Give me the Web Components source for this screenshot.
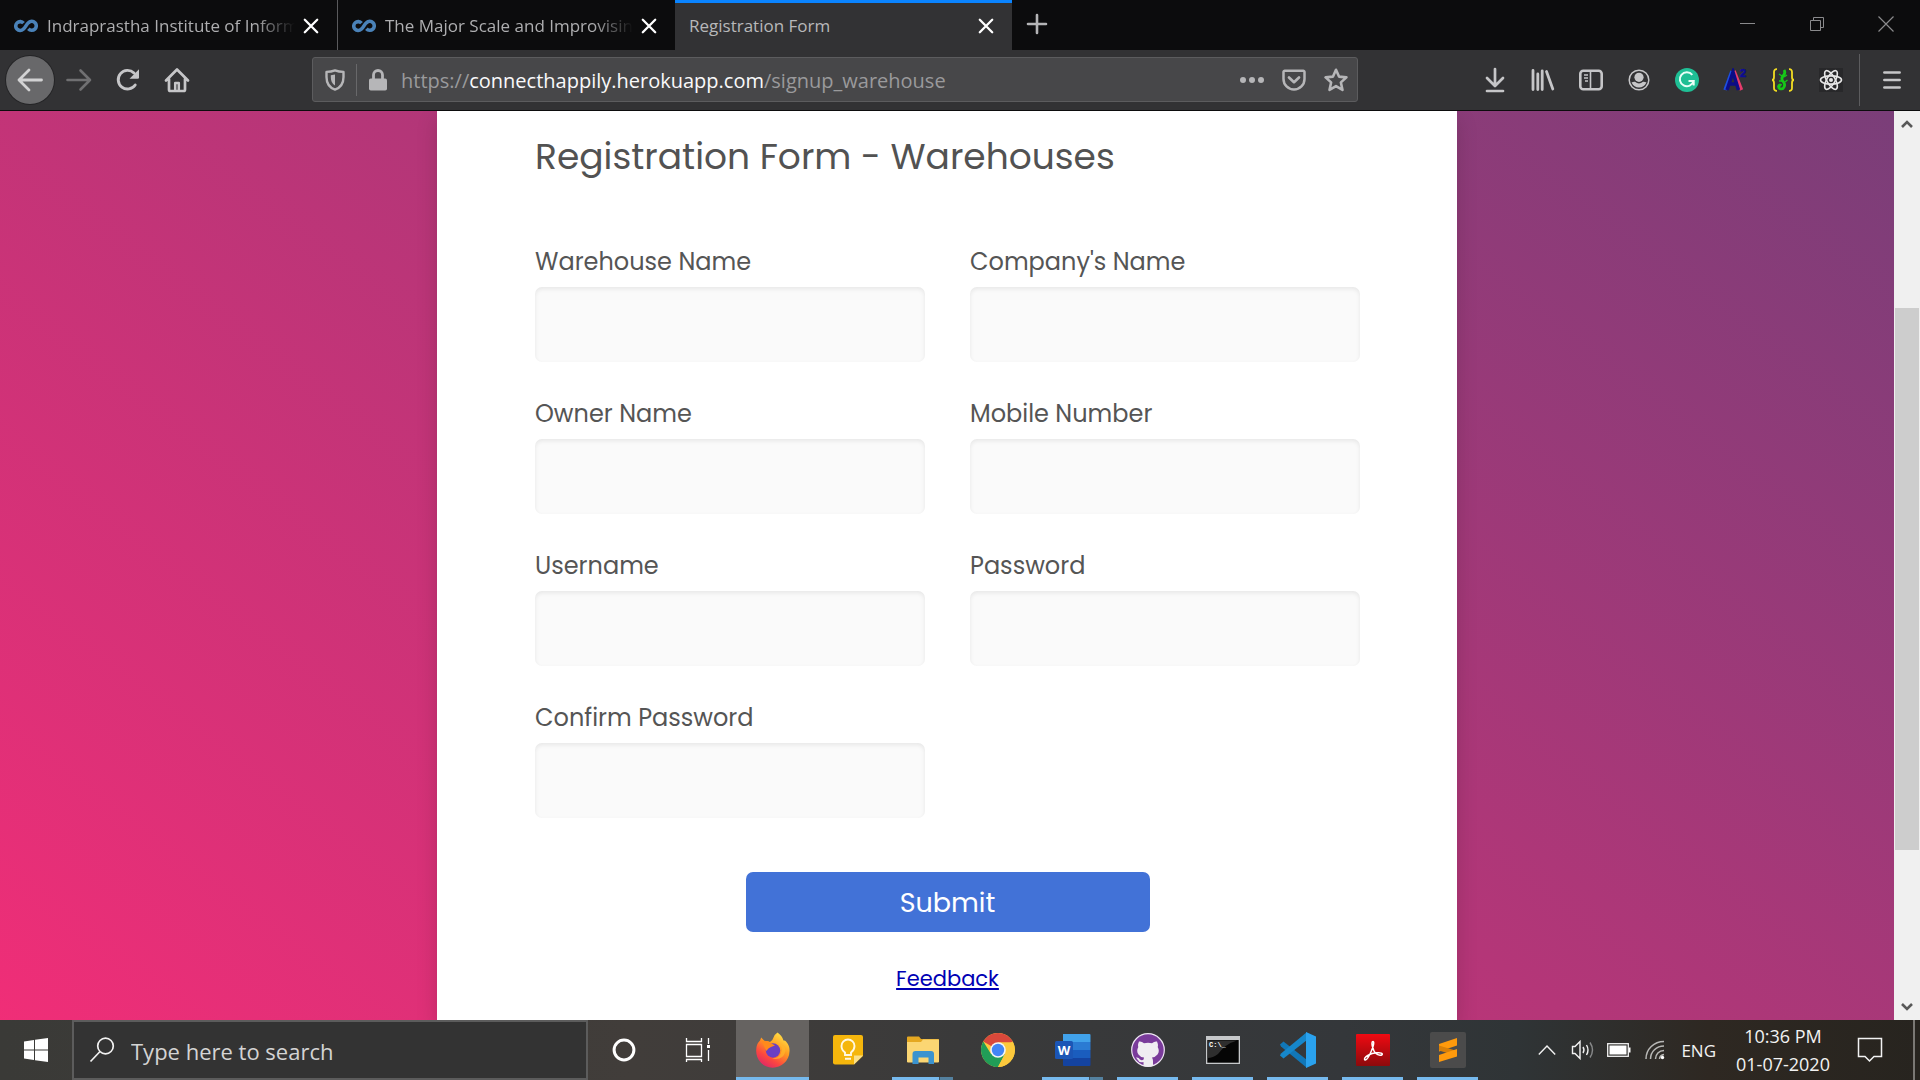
<!DOCTYPE html>
<html lang="en">
<head>
<meta charset="utf-8">
<title>Registration Form</title>
<style>
  html, body { margin: 0; height: 100%; }
  body { overflow: hidden; background: #0c0c0d; font-family: "Segoe UI", "Open Sans", "Noto Sans", sans-serif; }
</style>
</head>
<body>
<desk-top></desk-top>

<script>
const ICONS = {
  coursera: `<svg width="24" height="16" viewBox="0 0 24 16" fill="none" stroke="#4a82b8" stroke-width="3.6"><path d="M9.5 5.200A4.400 4.400 0 1 0 9.200 11.200C11.800 9.500 12 6.500 14.600 4.600A4.500 4.500 0 1 1 14.400 10.800"/></svg>`,
  close: `<svg width="16" height="16" viewBox="0 0 16 16" stroke="#fff" stroke-width="2.3" stroke-linecap="round"><path d="M1.8 1.8 14.2 14.2M14.2 1.8 1.8 14.2"/></svg>`,
  plus: `<svg width="22" height="22" viewBox="0 0 22 22" stroke="#b4b4b6" stroke-width="2.6" stroke-linecap="round"><path d="M11 2V20M2 11H20"/></svg>`,
  winMin: `<svg width="16" height="16" viewBox="0 0 16 16" stroke="#8a8a8c"><path d="M0 7.5H15"/></svg>`,
  winRestore: `<svg width="16" height="16" viewBox="0 0 16 16" fill="none" stroke="#8a8a8c"><path d="M1.5 4.5H11.5V14.5H1.5ZM4.5 4V1.5H14.5V11.5H12"/></svg>`,
  winClose: `<svg width="16" height="16" viewBox="0 0 16 16" stroke="#8a8a8c" stroke-width="1.2"><path d="M.5.5 15.5 15.5M15.5.5.5 15.5"/></svg>`,
  back: `<svg width="26" height="24" viewBox="0 0 26 24" fill="none" stroke="#d2d2d3" stroke-width="2.8" stroke-linecap="round" stroke-linejoin="round"><path d="M24.5 12H2M12 2 2 12 12 22"/></svg>`,
  forward: `<svg width="26" height="24" viewBox="0 0 26 24" fill="none" stroke="#707072" stroke-width="2.6" stroke-linecap="round" stroke-linejoin="round"><path d="M1.5 12H24M14.5 2.5 24 12 14.5 21.5"/></svg>`,
  reload: `<svg width="24" height="24" viewBox="0 0 24 24"><path d="M19.2 17A9.3 9.3 0 1 1 18 5" fill="none" stroke="#c6c6c8" stroke-width="2.9" stroke-linecap="round"/><path d="M23 1.2V9.5a1.2 1.2 0 0 1-1.2 1.2H13.5Z" fill="#c6c6c8"/></svg>`,
  home: `<svg width="26" height="26" viewBox="0 0 26 26" fill="none" stroke="#c6c6c8" stroke-width="2.7" stroke-linecap="round" stroke-linejoin="round"><path d="M2 13.5 13 2.5 24 13.5M5 12V22.5A1.5 1.5 0 0 0 6.5 24H19.5A1.5 1.5 0 0 0 21 22.5V12"/><path d="M11.2 23V16H14.8V23" stroke-width="2.5"/></svg>`,
  shield: `<svg width="20" height="22" viewBox="0 0 20 22"><path d="M10 1.4C12.5 2.4 15.500 2.9 18.5 2.9V8C18.5 14 16 18.5 10 20.6 4 18.5 1.5 14 1.5 8V2.9C4.5 2.9 7.5 2.4 10 1.4Z" fill="none" stroke="#b6b6b8" stroke-width="2.4" stroke-linejoin="round"/><path d="M10 5.5V16.5C7 14.8 5.8 12 5.8 8V6.3Z" fill="#b6b6b8"/></svg>`,
  lock: `<svg width="18" height="22" viewBox="0 0 18 22"><path d="M4.5 11V6A4.5 4.5 0 0 1 13.5 6V11" fill="none" stroke="#b6b6b8" stroke-width="2.8"/><rect y="9.5" width="18" height="12" rx="1.8" fill="#b6b6b8"/></svg>`,
  dots: `<svg width="24" height="8" viewBox="0 0 24 8" fill="#b6b6b8"><circle cx="3" cy="4" r="3"/><circle cx="12" cy="4" r="3"/><circle cx="21" cy="4" r="3"/></svg>`,
  pocket: `<svg width="24" height="22" viewBox="0 0 24 22" fill="none" stroke="#b6b6b8" stroke-width="2.5" stroke-linecap="round" stroke-linejoin="round"><path d="M2.8 1.8H21.2A1.2 1.2 0 0 1 22.5 3V10A10.5 10.5 0 0 1 1.5 10V3A1.2 1.2 0 0 1 2.8 1.8Z"/><path d="M7 8.5 12 13.2 17 8.5" stroke-width="2.7"/></svg>`,
  star: `<svg width="24" height="24" viewBox="0 0 24 24" fill="none" stroke="#b6b6b8" stroke-width="2.6" stroke-linejoin="round"><path d="M12 1.8 15 8.6 22.4 9.4 16.9 14.4 18.5 21.9 12 18.1 5.5 21.9 7.1 14.4 1.6 9.4 9 8.6Z"/></svg>`,
  download: `<svg width="20" height="26" viewBox="0 0 20 26" fill="none" stroke="#c6c6c8" stroke-width="2.7" stroke-linecap="round" stroke-linejoin="round"><path d="M10 2V18M2 11 10 19 18 11M2 24H18"/></svg>`,
  library: `<svg width="24" height="22" viewBox="0 0 24 22" fill="none" stroke="#c6c6c8" stroke-width="2.8" stroke-linecap="round"><path d="M2 1.5V20.5M6.8 5V20.5M11.2 1.8V20.5M15.5 2.5 21.8 20"/></svg>`,
  sidebar: `<svg width="24" height="22" viewBox="0 0 24 22"><rect x="1.3" y="1.8" width="21.4" height="18.4" rx="3" fill="none" stroke="#c6c6c8" stroke-width="2.6"/><path d="M11.5 2V20" stroke="#c6c6c8" stroke-width="1.6"/><path d="M5 6H9M5 9H9M6 12H9" stroke="#c6c6c8" stroke-width="1.5"/></svg>`,
  account: `<svg width="22" height="22" viewBox="0 0 22 22"><circle cx="11" cy="11" r="9.8" fill="none" stroke="#c6c6c8" stroke-width="1.5"/><circle cx="11" cy="8.3" r="4.6" fill="#c6c6c8"/><path d="M3.5 13.5Q5.5 12.5 7 12.8 11 16 15 12.8 16.5 12.5 18.5 13.5 16 18.5 11 18.5 6 18.5 3.5 13.5Z" fill="#c6c6c8"/></svg>`,
  grammarly: `<svg width="24" height="24" viewBox="0 0 24 24"><circle cx="12" cy="12" r="12" fill="#1fbf95"/><path d="M17.3 6.8A7 7 0 1 0 18.6 13H13.5M18.7 13V17.5" fill="none" stroke="#e9fff8" stroke-width="2"/></svg>`,
  answer: `<svg width="26" height="24" viewBox="0 0 26 24" font-family="Liberation Sans, sans-serif" font-weight="700"><g fill="none" stroke-width="3.5"><path d="M3 22 10 3" stroke="#1c4fe0"/><path d="M12 3 19.500 22" stroke="#e83c6c"/><path d="M5 22 11 4 16.500 22M7 16H15" stroke="#0c0c86"/></g><text x="18" y="9" font-size="11" fill="#0c0c96" stroke="#0c0c96" stroke-width=".6">2</text></svg>`,
  gecko: `<svg width="24" height="24" viewBox="0 0 24 24" fill="none"><path d="M6 1.2Q3 1 3 4V9Q3 12 1 12 3 12 3 15V20Q3 23 6 22.8M18 1.2Q21 1 21 4V9Q21 12 23 12 21 12 21 15V20Q21 23 18 22.8" stroke="#f2dc22" stroke-width="1.8"/><path d="M13 2Q15 5 12 8 9.500 11 12.5 14 15 17.500 12 20.500 8 22 7.5 18.5 8 16 10.5 17.5" stroke="#16c818" stroke-width="2.8"/><path d="M8 6 11 8M16 7 13 9M8 13H11M14 14 16.5 12" stroke="#16c818" stroke-width="1.3"/></svg>`,
  react: `<svg width="24" height="24" viewBox="0 0 24 24" fill="none" stroke="#e6e6e6" stroke-width="1.6"><rect width="24" height="24" fill="#28282a" stroke="none"/><ellipse cx="12" cy="12" rx="10.5" ry="4.1"/><ellipse cx="12" cy="12" rx="10.5" ry="4.1" transform="rotate(60 12 12)"/><ellipse cx="12" cy="12" rx="10.5" ry="4.1" transform="rotate(120 12 12)"/><circle cx="12" cy="12" r="2" fill="#e6e6e6" stroke="none"/></svg>`,
  menu: `<svg width="18" height="20" viewBox="0 0 18 20" stroke="#c6c6c8" stroke-width="2.7" stroke-linecap="round"><path d="M1.4 2.5H16.6M1.4 10H16.6M1.4 17.5H16.6"/></svg>`,
  up: `<svg width="12" height="10" viewBox="0 0 12 10" fill="none" stroke="#585858" stroke-width="2.6"><path d="M1 8 6 3 11 8"/></svg>`,
  down: `<svg width="12" height="10" viewBox="0 0 12 10" fill="none" stroke="#585858" stroke-width="2.6"><path d="M1 2 6 7 11 2"/></svg>`,
  windows: `<svg width="24" height="24" viewBox="0 0 24 24" fill="#fff"><path d="M0 3.4 10 2V11.5H0ZM11 1.8 24 0V11.5H11ZM0 12.5H10V22L0 20.6ZM11 12.5H24V24L11 22.2Z"/></svg>`,
  search: `<svg width="26" height="26" viewBox="0 0 26 26" fill="none" stroke="#f2f2f2" stroke-width="1.7"><circle cx="16.5" cy="9" r="7.8"/><path d="M11 14.5 1.5 24.5"/></svg>`,
  cortana: `<svg width="24" height="24" viewBox="0 0 24 24"><circle cx="12" cy="12" r="9.9" fill="none" stroke="#fff" stroke-width="3"/></svg>`,
  taskview: `<svg width="26" height="24" viewBox="0 0 26 24" fill="none" stroke="#fff" stroke-width="1.3"><path d="M1.5 6.5H16.5V18.5H1.5ZM1.5 0V3.5H16.5V0M1.5 24V21.5H16.5V24M23.5 0V6M23.5 12V23"/><path d="M22 7H25V10H22Z" fill="#fff" stroke="none"/></svg>`,
  firefox: `<svg width="36" height="36" viewBox="0 0 36 36"><defs><linearGradient id="f" x1=".8" y1="0" x2=".2" y2="1"><stop offset="0" stop-color="#ffe84a"/><stop offset=".4" stop-color="#ff9a20"/><stop offset=".72" stop-color="#fc4640"/><stop offset="1" stop-color="#d8246e"/></linearGradient></defs><path d="M22.5.5Q27 3.5 28.5 8.5 30 8 31 9.5 35 14 34.5 19.5A16.6 16.6 0 0 1 1.2 18.5Q1 12.5 5 8.5L6.2 5.5 9.5 9Q13 8.5 15 10 18 8 18.5 5.500 20 2 22.5.5Z" fill="url(#f)"/><circle cx="18" cy="18.5" r="7.2" fill="#6a3fc4"/><path d="M7 9Q12 8 15.5 11L20 13.5Q17 14.5 15 15.5 13 16 11.5 19 8.5 14 7 9Z" fill="#ff8a1c"/><path d="M22 11Q29 14 26 21 24 26 17 26.5 28 29 30.5 19 31 13 22 11Z" fill="#ffb62c" opacity=".7"/></svg>`,
  keep: `<svg width="30" height="30" viewBox="0 0 30 30"><path d="M2 0H28a2 2 0 0 1 2 2V21L21 29.5H2a2 2 0 0 1-2-2V2a2 2 0 0 1 2-2Z" fill="#f5b60c"/><path d="M30 20.5 21 29.5V20.5Z" fill="#fbe089"/><path d="M12 20V17.5Q8.5 15 8.5 11A6.5 6.5 0 0 1 21.5 11Q21.5 15 18 17.5V20ZM12 23.800H18" fill="none" stroke="#fff8e2" stroke-width="1.9"/></svg>`,
  explorer: `<svg width="34" height="28" viewBox="0 0 34 28"><path d="M1 1.5Q1 .5 2 .5H13L15 3H32Q33 3 33 4V26H1Z" fill="#e5a821"/><path d="M1 6H15L17 3.5H33V25.5Q33 26.5 32 26.5H2Q1 26.5 1 25.5Z" fill="#fbd673"/><path d="M6.5 28V18Q6.5 15 9.5 15H25Q28 15 28 18V28H22.5V21.5H12.5V28Z" fill="#3b93cf"/></svg>`,
  chrome: `<svg width="34" height="34" viewBox="0 0 34 34"><circle cx="17" cy="17" r="17" fill="#fcc93c"/><path d="M17 17 2.3 8.5A17 17 0 0 1 31.7 8.500Z" fill="#d9483b"/><path d="M2.3 8.5A17 17 0 0 0 17 34L23.8 21 17 17 10 21Z" fill="#219d57"/><path d="M17 9.2H32A17 17 0 0 1 17 34L24 21Z" fill="#fcc93c"/><circle cx="17" cy="17" r="7.8" fill="#f4f4f4"/><circle cx="17" cy="17" r="6.2" fill="#4285f4"/></svg>`,
  word: `<svg width="36" height="32" viewBox="0 0 36 32"><path d="M8 0H34.5a1 1 0 0 1 1 1V8H8Z" fill="#41a2ea"/><path d="M8 8H35.5V16H8Z" fill="#2b7bd3"/><path d="M8 16H35.5V24H8Z" fill="#1a5dbe"/><path d="M8 24H35.5V31a1 1 0 0 1-1 1H9a1 1 0 0 1-1-1Z" fill="#1443a0"/><rect y="7" width="18" height="18" rx="1.5" fill="#1b56b6"/><text x="9" y="20.5" text-anchor="middle" font-family="Open Sans, sans-serif" font-weight="700" font-size="13" fill="#fff">W</text></svg>`,
  github: `<svg width="34" height="34" viewBox="0 0 34 34"><circle cx="17" cy="17" r="16.3" fill="#7a3b9b" stroke="#efe6f4" stroke-width="1.2"/><path d="M8 8.5Q10.5 8 13 10.2 17 9.3 21 10.2 23.5 8 26 8.5 27.5 12 26.7 14 29 18 26.5 21.5 24.5 24 21 24.5 22 26 22 28V32.7Q17 34.5 12.5 32.7V29Q8 30 6.5 26.5L5 24.5Q7.5 24 9 26.5 11 28 12.6 26.5L13 24.5Q9 24 7.5 21.5 5 18 7.3 14 6.5 12 8 8.5Z" fill="#f0edf2"/></svg>`,
  terminal: `<svg width="34" height="28" viewBox="0 0 34 28"><rect x=".6" y=".6" width="32.8" height="26.8" fill="#050505" stroke="#c6c8ca" stroke-width="1.4"/><path d="M1 1H33V4H1Z" fill="#c6c8ca"/><path d="M1.5 4.5H31Q19 8 12 18 7 22 1.5 22Z" fill="#404040" opacity=".7"/><text x="3" y="10.5" font-family="Liberation Mono, monospace" font-weight="700" font-size="7" fill="#fff">C:\\_</text></svg>`,
  vscode: `<svg width="36" height="36" viewBox="0 0 36 36"><path d="M0 12.5 3.5 9.5 27 28V36L1 14.5Z" fill="#1177b8"/><path d="M0 23.5 3.5 26.5 27 8V0L1 21.5Z" fill="#1687cb"/><path d="M26 0 36 4.5V31.5L26 36Z" fill="#2aa2ee"/></svg>`,
  acrobat: `<svg width="34" height="32" viewBox="0 0 34 32"><defs><linearGradient id="a" x2="0" y2="1"><stop stop-color="#f00a12"/><stop offset="1" stop-color="#8c0a0c"/></linearGradient></defs><rect width="34" height="32" rx="1" fill="url(#a)"/><path d="M17 7.5C14.5 7.5 17 17 20 19.5 22 21.5 26.5 22 26.3 20 25.5 17.5 16.5 19 12.5 21 9 22.5 7.5 25.8 9.3 26 12.5 25.5 20 8 17 7.5Z" fill="none" stroke="#fff" stroke-width="1.5"/></svg>`,
  sublime: `<svg width="36" height="36" viewBox="0 0 36 36"><rect width="36" height="36" rx="2" fill="#4b4b4b"/><path d="M27 6 9 12V19.5L27 13.5Z" fill="#ff9a0c"/><path d="M9 13.5 27 19V24L9 18.5Z" fill="#d98008"/><path d="M27 17 9 23V30L27 24.5Z" fill="#ff9a0c"/></svg>`,
  chevron: `<svg width="18" height="12" viewBox="0 0 18 12" fill="none" stroke="#f2f2f2" stroke-width="1.4"><path d="M.8 10.5 9 2 17.2 10.5"/></svg>`,
  speaker: `<svg width="24" height="20" viewBox="0 0 24 20" fill="none" stroke="#f2f2f2" stroke-width="1.4"><path d="M1.5 6.5H4L9 1.5V18.5L4 13.5H1.5Z"/><path d="M12 7Q14 10 12 13M15.5 5Q18.5 10 15.5 15"/><path d="M19 2.5Q24 10 19 17.5" stroke="#88898a"/></svg>`,
  battery: `<svg width="24" height="14" viewBox="0 0 24 14"><rect x=".7" y=".7" width="20.6" height="12.6" fill="none" stroke="#f2f2f2" stroke-width="1.3"/><rect x="2.5" y="2.5" width="17" height="9" fill="#fff"/><path d="M22 4.5H23.5V9.5H22Z" fill="#fff"/></svg>`,
  wifi: `<svg width="20" height="20" viewBox="0 0 20 20" fill="none" stroke="#b8b8b6" stroke-width="1.5"><path d="M1 19C1 9 9 1.5 19 1.5M5.5 19C5.5 11.5 11.5 6 19 6M10.5 19C10.5 14.5 14 10.5 19 10.5M14.5 19Q15 15 19 14.5"/><circle cx="17.5" cy="17.5" r="1.7" fill="#fff" stroke="none"/></svg>`,
  notice: `<svg width="26" height="26" viewBox="0 0 26 26" fill="none" stroke="#f2f2f2" stroke-width="1.5"><path d="M1.5 1.5H24.5V19.5H17L12.5 24 8 19.5H1.5Z"/></svg>`
};

/* Shared base: each subclass supplies its shadow markup through render(). */
class Part extends HTMLElement {
  connectedCallback() {
    if (this.shadowRoot) return;
    const tpl = document.createElement("template");
    tpl.innerHTML = `<style>
      :host { box-sizing: border-box; } *, *::before { box-sizing: border-box; }
      button, input { font: inherit; color: inherit; background: none; border: 0; padding: 0; margin: 0; }
      svg { display: block; flex: none; }
    </style>` + this.render();
    this.attachShadow({ mode: "open" }).append(tpl.content.cloneNode(true));
  }
}
const define = (name, render) => customElements.define(name, class extends Part { render() { return render(this); } });

/* Icon button; its box is set by the user's --w and --h. */
define("icon-button", el => `<style>
  :host { display: block; flex: none; width: var(--w, 48px); height: var(--h, 48px); }
  button { width: 100%; height: 100%; display: flex; align-items: center; justify-content: center; }
  :host([round]) button { border-radius: 50%; background: #68686a; box-shadow: 0 0 0 1px #242426; }
</style><button type="button" aria-label="${el.getAttribute("label")}">${ICONS[el.getAttribute("icon")]}</button>`);

define("browser-tab", el => `<style>
  :host { display: flex; align-items: center; width: 338px; height: 50px; padding: 2px 18px 0 14px; border-right: 1px solid #5a5a5c; color: #aeaeb0; font-size: 17px; }
  :host([last]) { border-right: 0; width: 337px; }
  :host([active]) { background: #323234; border-right: 0; border-top: 3px solid #0a84ff; width: 337px; padding: 0 18px 1px 14px; color: #b8b8ba; }
  .fav { margin-right: 9px; }
  .title { flex: 1; min-width: 0; overflow: hidden; white-space: nowrap; line-height: 26px; }
  :host(:not([active])) .title { -webkit-mask-image: linear-gradient(to right, #000 84%, transparent); mask-image: linear-gradient(to right, #000 84%, transparent); }
  icon-button { --w: 16px; --h: 24px; margin-left: 8px; }
</style>${el.hasAttribute("icon") ? `<span class="fav">${ICONS[el.getAttribute("icon")]}</span>` : ""}
<span class="title"><slot></slot></span><icon-button icon="close" label="Close tab"></icon-button>`);

define("tab-strip", () => `<style>
  :host { display: flex; height: 50px; background: #0c0c0d; }
  .win { margin-left: auto; display: flex; --w: 69px; --h: 48px; }
  .new { --w: 50px; }
</style>
<browser-tab icon="coursera">Indraprastha Institute of Information</browser-tab>
<browser-tab icon="coursera" last>The Major Scale and Improvising</browser-tab>
<browser-tab active>Registration Form</browser-tab>
<icon-button class="new" icon="plus" label="New tab"></icon-button>
<div class="win"><icon-button icon="winMin" label="Minimise"></icon-button><icon-button icon="winRestore" label="Restore"></icon-button><icon-button icon="winClose" label="Close"></icon-button></div>`);

define("address-bar", () => `<style>
  :host { display: flex; align-items: center; flex: 1; height: 45px; padding-left: 1px; background: #474749; border: 1px solid #5c5c5e; border-radius: 3px; color: #9a9a9c; --w: 42px; --h: 42px; }
  .sep { width: 1px; height: 32px; background: #68686a; }
  .url { flex: 1; font-size: 20px; line-height: 32px; padding: 2px 0 0 2px; white-space: nowrap; outline: 0; }
  b { font-weight: 400; color: #f9f9fa; }
</style>
<icon-button icon="shield" label="Protections"></icon-button><span class="sep"></span>
<icon-button icon="lock" label="Site information"></icon-button>
<div class="url" role="textbox" aria-label="Address" contenteditable="true" spellcheck="false">https://<b>connecthappily.herokuapp.com</b>/signup_warehouse</div>
<icon-button icon="dots" label="Page actions"></icon-button><icon-button icon="pocket" label="Save to Pocket"></icon-button><icon-button icon="star" label="Bookmark"></icon-button>`);

define("nav-bar", () => `<style>
  :host { display: flex; align-items: center; height: 61px; padding: 0 4px 1px 6px; background: #323234; border-bottom: 1px solid #0c0c0d; }
  .nav, .tools { display: flex; }
  .nav { gap: 1px; }
  address-bar { margin: 0 113px 0 111px; }
  .sep { width: 1px; height: 52px; background: #5c5c5e; margin: 0 8px 0 4px; }
</style>
<div class="nav"><icon-button round icon="back" label="Back"></icon-button><icon-button icon="forward" label="Forward"></icon-button><icon-button icon="reload" label="Reload"></icon-button><icon-button icon="home" label="Home"></icon-button></div>
<address-bar></address-bar>
<div class="tools">${["download","library","sidebar","account","grammarly","answer","gecko","react"].map(i => `<icon-button icon="${i}" label="${i}"></icon-button>`).join("")}</div>
<span class="sep"></span><icon-button icon="menu" label="Menu"></icon-button>`);

define("form-field", el => `<style>
  :host { display: block; }
  label { display: block; font-size: 24px; line-height: 36px; margin-bottom: 7px; }
  input { display: block; width: 100%; height: 75px; padding: 0 22px; background: #fafafa; border-radius: 7px; box-shadow: inset 0 2px 4px rgba(0,0,0,.08); outline: 0; }
</style><label for="field">${el.getAttribute("label")}</label><input id="field" type="${el.getAttribute("type") || "text"}">`);

define("signup-card", () => `<style>
  :host { display: block; width: 1020px; min-height: 100%; padding: 22px 97px 25px 98px; background: #fff; color: #555; font-family: Poppins, Inter, sans-serif; box-shadow: 0 8px 20px rgba(0,0,0,.15); }
  h1 { margin: 0 0 63px; font-size: 36px; line-height: 48px; font-weight: 400; color: #525252; }
  .grid { display: grid; grid-template-columns: 1fr 1fr; gap: 34px 45px; }
  .foot { display: flex; flex-direction: column; align-items: center; margin-top: 54px; gap: 31px; }
  button { width: 404px; height: 60px; border-radius: 7px; background: #4272d7; color: #fff; font-size: 27px; padding-top: 2px; }
  a { font-size: 21px; line-height: 32px; color: #0000b4; }
</style>
<form onsubmit="return false"><h1>Registration Form - Warehouses</h1>
<div class="grid"><form-field label="Warehouse Name"></form-field><form-field label="Company's Name"></form-field><form-field label="Owner Name"></form-field><form-field label="Mobile Number" type="tel"></form-field><form-field label="Username"></form-field><form-field label="Password" type="password"></form-field><form-field label="Confirm Password" type="password"></form-field></div>
<div class="foot"><button type="submit">Submit</button><a href="#feedback">Feedback</a></div></form>`);

define("scroll-track", () => `<style>
  :host { display: flex; flex-direction: column; width: 26px; background: #f0f0f0; --w: 26px; --h: 26px; }
  .before { flex: 171; } .thumb { flex: 542; margin: 0 1px; background: #cdcdcd; } .after { flex: 144; }
</style><icon-button icon="up" label="Scroll up"></icon-button><div class="before"></div><div class="thumb"></div><div class="after"></div><icon-button icon="down" label="Scroll down"></icon-button>`);

/* The gradient belongs to the whole page, of which the view shows the middle part. */
define("page-view", () => `<style>
  :host { display: flex; flex: 1; min-height: 0; }
  main { flex: 1; display: flex; justify-content: center; overflow: hidden; background: linear-gradient(to top right, #fc2c77, #6c4079) 0 54% / 100% 158%; }
</style><main><signup-card></signup-card></main><scroll-track></scroll-track>`);

define("task-button", el => `<style>
  :host { display: flex; justify-content: center; width: 75px; height: 60px; }
  button { display: grid; grid-template-rows: 57px 3px; justify-items: center; align-items: center; width: 61px; }
  :host([active]) button { width: 73px; background: #666361; }
  svg { margin-top: 3px; }
  i { width: 100%; height: 3px; }
  :host([running]) i { background: #76b9ed; }
  :host([multi]) i { background: linear-gradient(to right, #76b9ed 47px, #3f5667 47px 48px, #54819f 48px); }
</style><button type="button" aria-label="${el.getAttribute("icon")}">${ICONS[el.getAttribute("icon")]}<i></i></button>`);

define("task-bar", () => `<style>
  :host { display: flex; align-items: center; height: 60px; color: #f2f2f2; --h: 60px;
    background: linear-gradient(to right, #3a3a37, #413d3a 33%, #3a3a3a 50%, #34373a 70%, #2f3436 79%, #2e2822 89%, #27241f); }
  .search { display: flex; align-items: center; width: 516px; height: 60px; border: 2px solid #5c5c5c; background: #333; padding: 0 15px; }
  .search svg { margin-right: 16px; }
  input { flex: 1; min-width: 0; font-size: 22px; padding-top: 2px; outline: 0; }
  input::placeholder { color: #d4d4d4; opacity: 1; }
  .apps { display: flex; }
  .tray { display: flex; align-items: center; margin-left: auto; --w: 36px; font-size: 17px; }
  .lang { padding: 0 6px; margin-left: 2px; }
  .clock { width: 122px; text-align: center; font-size: 18px; line-height: 28px; padding-bottom: 1px; }
  .notice { --w: 52px; }
  .show { width: 7px; height: 60px; border-left: 2px solid #7a7874; margin-left: 17px; }
  .start { --w: 72px; } .cortana { --w: 72px; } .view { --w: 75px; }
</style>
<icon-button class="start" icon="windows" label="Start"></icon-button>
<label class="search">${ICONS.search}<input type="search" placeholder="Type here to search" aria-label="Search"></label>
<icon-button class="cortana" icon="cortana" label="Cortana"></icon-button><icon-button class="view" icon="taskview" label="Task view"></icon-button>
<div class="apps"><task-button icon="firefox" active running></task-button><task-button icon="keep"></task-button><task-button icon="explorer" running multi></task-button><task-button icon="chrome"></task-button><task-button icon="word" running multi></task-button><task-button icon="github" running></task-button><task-button icon="terminal" running></task-button><task-button icon="vscode" running></task-button><task-button icon="acrobat" running></task-button><task-button icon="sublime" running></task-button></div>
<div class="tray"><icon-button icon="chevron" label="Hidden icons"></icon-button><icon-button icon="speaker" label="Volume"></icon-button><icon-button icon="battery" label="Battery"></icon-button><icon-button icon="wifi" label="Network"></icon-button>
<span class="lang">ENG</span><div class="clock"><div>10:36 PM</div><div>01-07-2020</div></div>
<icon-button class="notice" icon="notice" label="Notifications"></icon-button><span class="show"></span></div>`);

define("desk-top", () => `<style>:host { display: flex; flex-direction: column; height: 100vh; }</style>
<tab-strip></tab-strip><nav-bar></nav-bar><page-view></page-view><task-bar></task-bar>`);
</script>
</body>
</html>
